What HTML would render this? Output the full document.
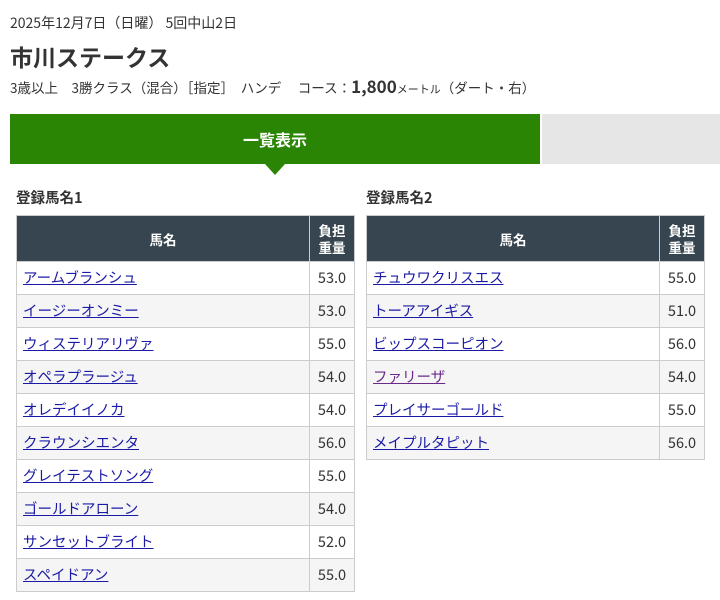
<!DOCTYPE html>
<html><head><meta charset="utf-8"><style>
*{margin:0;padding:0;box-sizing:border-box}
body{width:720px;height:600px;overflow:hidden;background:#fff;font-family:"Noto Sans CJK JP","Liberation Sans",sans-serif;color:#333}
.d{position:absolute;left:10px;top:13px;font-size:14px;line-height:20px}
.t{position:absolute;left:10px;top:40px;font-size:23px;font-weight:bold;line-height:32px}
.s{position:absolute;left:10px;top:75px;font-size:13.5px;line-height:22px}
.s b{font-size:17px}
.s small{font-size:11px}
.tab{position:absolute;left:10px;top:114px;width:530px;height:50px;background:#2a8505;color:#fff;font-weight:bold;font-size:16px;text-align:center;line-height:50px}
.tab2{position:absolute;left:542px;top:114px;width:178px;height:50px;background:#e6e6e6}
.tri{position:absolute;left:265px;top:164px;width:0;height:0;border-left:10px solid transparent;border-right:10px solid transparent;border-top:11px solid #2a8505}
h3{position:absolute;font-size:14.5px;font-weight:bold;top:187px;line-height:22px}
table{position:absolute;top:215px;border-collapse:collapse;width:339px}
th{background:#36454f;color:#fff;font-size:13.5px;border:1px solid #ccc;height:46px;font-weight:bold;vertical-align:middle}
th.w{width:45px;line-height:17px}
td{border:1px solid #ccc;height:33px;font-size:14.5px;padding:0 6px;vertical-align:middle;line-height:20px}
td.w{text-align:center;padding:0}
tr:nth-child(odd) td{background:#f5f5f5}
a{color:#1a1aa6;text-decoration:underline}
a.v{color:#6b2a8a}
</style></head><body>
<div class="d">2025年12月7日（日曜） 5回中山2日</div>
<div class="t">市川ステークス</div>
<div class="s">3歳以上　3勝クラス（混合）［指定］　ハンデ　 コース：<b>1,800</b><small>メートル</small>（ダート・右）</div>
<div class="tab">一覧表示</div><div class="tab2"></div><div class="tri"></div>
<h3 style="left:16px">登録馬名1</h3>
<h3 style="left:366px">登録馬名2</h3>
<table style="left:16px">
<tr><th>馬名</th><th class="w">負担<br>重量</th></tr>
<tr><td><a>アームブランシュ</a></td><td class="w">53.0</td></tr>
<tr><td><a>イージーオンミー</a></td><td class="w">53.0</td></tr>
<tr><td><a>ウィステリアリヴァ</a></td><td class="w">55.0</td></tr>
<tr><td><a>オペラプラージュ</a></td><td class="w">54.0</td></tr>
<tr><td><a>オレデイイノカ</a></td><td class="w">54.0</td></tr>
<tr><td><a>クラウンシエンタ</a></td><td class="w">56.0</td></tr>
<tr><td><a>グレイテストソング</a></td><td class="w">55.0</td></tr>
<tr><td><a>ゴールドアローン</a></td><td class="w">54.0</td></tr>
<tr><td><a>サンセットブライト</a></td><td class="w">52.0</td></tr>
<tr><td><a>スペイドアン</a></td><td class="w">55.0</td></tr>
</table>
<table style="left:366px">
<tr><th>馬名</th><th class="w">負担<br>重量</th></tr>
<tr><td><a>チュウワクリスエス</a></td><td class="w">55.0</td></tr>
<tr><td><a>トーアアイギス</a></td><td class="w">51.0</td></tr>
<tr><td><a>ビップスコーピオン</a></td><td class="w">56.0</td></tr>
<tr><td><a class="v">ファリーザ</a></td><td class="w">54.0</td></tr>
<tr><td><a>プレイサーゴールド</a></td><td class="w">55.0</td></tr>
<tr><td><a>メイプルタピット</a></td><td class="w">56.0</td></tr>
</table>
</body></html>
